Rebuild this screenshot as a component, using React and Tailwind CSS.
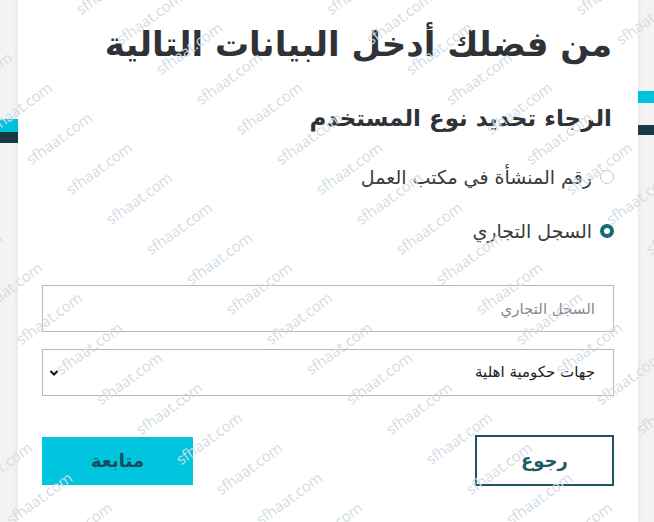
import React from 'react'

// watermark lattice: streams stepping down-right, repeated across
const marks = []
for (let j = -4; j <= 4; j++) {
  for (let k = -14; k <= 16; k++) {
    const cx = 178 + k * 40 + j * 250
    const cy = 228 + k * 30
    if (cx > -60 && cx < 714 && cy > -30 && cy < 552) marks.push({ x: cx - 38, y: cy - 10 })
  }
}

const Watermarks = () => (
  <div className="pointer-events-none absolute inset-0 overflow-hidden">
    {marks.map((m, i) => (
      <span
        key={i}
        className="absolute -rotate-[36deg] text-[15px] leading-[20px] text-[#d2dce4] font-['Open_Sans',sans-serif]"
        style={{ left: m.x, top: m.y }}
      >
        sfhaat.com
      </span>
    ))}
  </div>
)

const Radio = ({ checked, label }) => (
  <label className="flex h-[28px] items-center gap-[8px] text-[19px] text-[#3a3a3a]">
    {checked ? (
      <span className="h-[14px] w-[14px] rounded-full border-[4px] border-[#166a74] bg-white" />
    ) : (
      <span className="h-[14px] w-[14px] rounded-full border border-[#c9c9c9] bg-white" />
    )}
    <span>{label}</span>
  </label>
)

export default function App() {
  return (
    <div className="relative flex h-[522px] w-[654px] overflow-hidden bg-[#f3f3f3] font-['DejaVu_Sans',sans-serif]">
      {/* left edge stripes */}
      <div className="flex w-[18px] flex-col">
        <div className="mt-[119px] h-[13px] bg-[#00c2dc]" />
        <div className="h-[11px] bg-[#173a44]" />
      </div>

      <div dir="rtl" className="flex w-[620px] flex-col bg-white px-[24px] pt-[20px] shadow-[0_0_6px_rgba(0,0,0,0.08)]">
        <h1 className="pr-[2px] text-[34px] leading-[48px] font-bold text-[#2f3337]">
          من فضلك أدخل البيانات التالية
        </h1>
        <h2 className="mt-[33px] pr-[2px] text-[23px] leading-[34px] font-bold text-[#2f3337]">
          الرجاء تحديد نوع المستخدم
        </h2>

        <div className="mt-[28px] flex flex-col gap-[26px]">
          <Radio label="رقم المنشأة في مكتب العمل" />
          <Radio checked label="السجل التجاري" />
        </div>

        <input
          placeholder="السجل التجاري"
          className="mt-[40px] h-[47px] w-full border border-[#b9b9b9] bg-white pr-[18px] text-[15px] outline-none placeholder:text-[#8a8a8a]"
        />

        <div className="mt-[17px] flex h-[47px] w-full items-center justify-between border border-[#b9b9b9] bg-white pl-[6px] pr-[18px]">
          <span className="text-[15px] text-[#222]">جهات حكومية اهلية</span>
          <svg width="10" height="8" viewBox="0 0 10 8" className="text-[#111]">
            <path d="M1.5 2 L5 5.5 L8.5 2" fill="none" stroke="currentColor" strokeWidth="2" />
          </svg>
        </div>

        <div className="mt-[39px] flex items-center justify-between">
          <button className="h-[51px] w-[139px] border-2 border-[#1e5561] text-[18px] font-bold text-[#1e5a66]">
            رجوع
          </button>
          <button className="h-[48px] w-[151px] bg-[#00c5df] text-[18px] font-bold text-[#1c4c58]">
            متابعة
          </button>
        </div>
      </div>

      {/* right edge stripes */}
      <div className="flex w-[16px] flex-col">
        <div className="mt-[91px] h-[12px] bg-[#00c2dc]" />
        <div className="mt-[22px] h-[10px] bg-[#173a44]" />
      </div>

      <Watermarks />
    </div>
  )
}
